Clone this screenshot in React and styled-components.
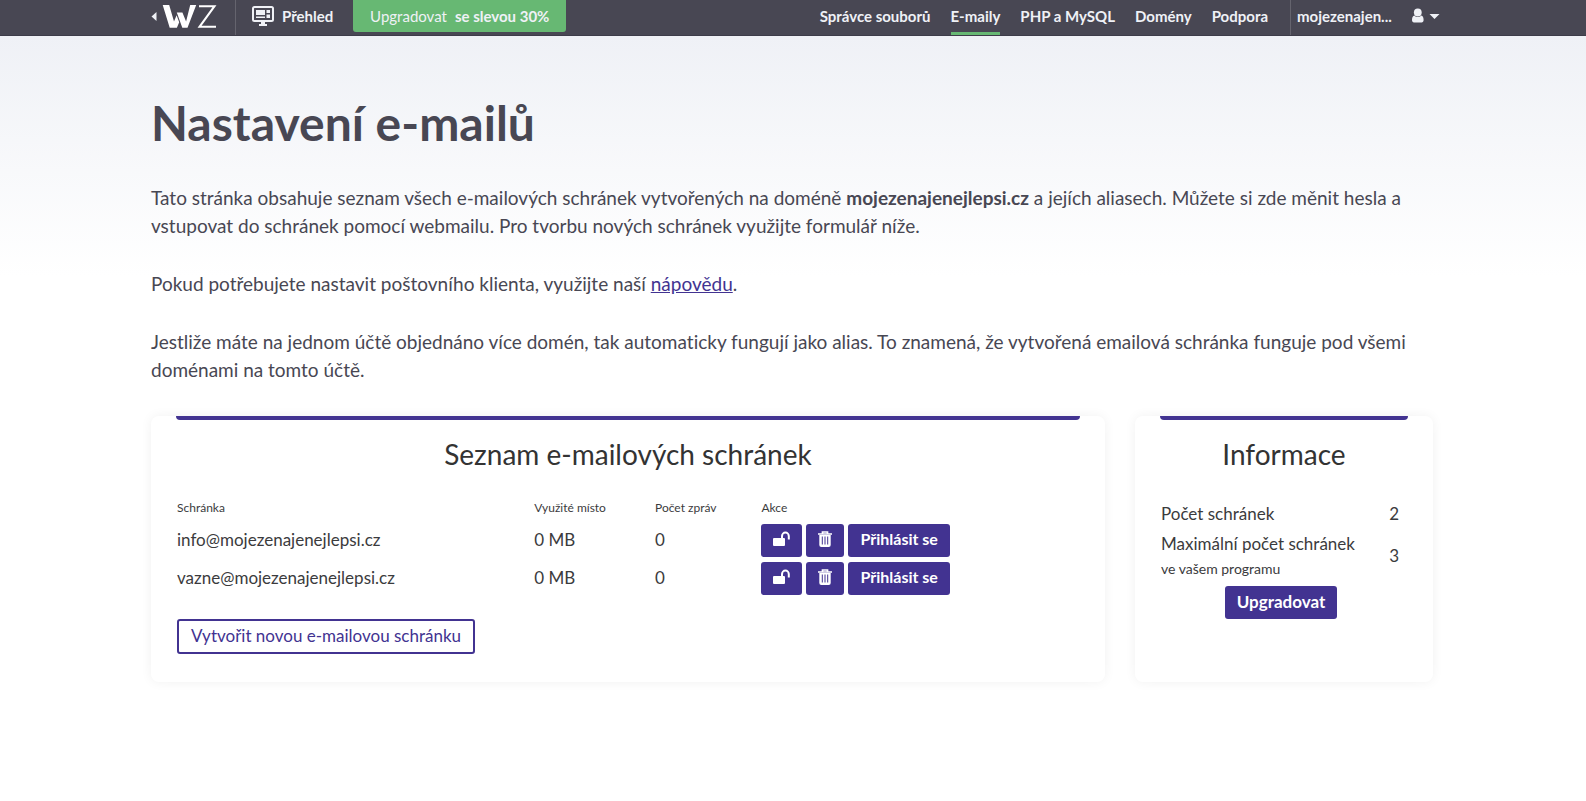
import React from 'react';
import styled, {createGlobalStyle} from 'styled-components';

const GlobalStyle = createGlobalStyle`
  * {
    box-sizing: border-box;
  }
  body {
    margin: 0;
    background: #fff linear-gradient(#eff1f6, #fff) no-repeat 0 36px / 100% 240px;
    color: #484753;
    font: 19px/28px Lato, "Liberation Sans", sans-serif;
    font-variant-ligatures: none;
  }
  button {
    font-family: inherit;
    cursor: pointer;
  }
`;

//-----< Header >-----\\
const Header = styled.header`
  background-color: #484753;
  border-bottom: 1px solid #3d3c49;
`;

const HeaderInner = styled.div`
  max-width: 1294px;
  height: 35px;
  margin: 0 auto;
  padding-left: 2px;
  display: flex;
  align-items: stretch;
  justify-content: space-between;
`;

const HeaderSide = styled.div`
  display: flex;
  align-items: stretch;
`;

const Logo = styled.a`
  display: flex;
  width: 88px;
  padding-left: 3px;
  border-right: 1px solid #65646e;
`;

const Overview = styled.a`
  display: flex;
  align-items: center;
  gap: 8px;
  padding: 0 20px 4px 16px;
  color: #eff1f6;
  font-size: 15px;
  font-weight: bold;
  line-height: 20px;
  text-decoration: none;
`;

const Promo = styled.a`
  display: flex;
  align-items: center;
  justify-content: center;
  gap: 8px;
  width: 213px;
  height: 32px;
  border-radius: 0 0 3px 3px;
  background-color: #67b873;
  color: #eff1f6;
  font-size: 15px;
  line-height: 20px;
  white-space: nowrap;
  text-decoration: none;
`;

const Nav = styled.nav`
  display: flex;
  gap: 20px;
  padding-right: 22px;
`;

const NavLink = styled.a`
  padding-top: 6px;
  border-bottom: 3px solid ${props => props.$active ? '#67b873' : 'transparent'};
  color: #eff1f6;
  font-size: 15px;
  font-weight: bold;
  line-height: 20px;
  white-space: nowrap;
  text-decoration: none;
`;

const Account = styled.button`
  display: flex;
  align-items: center;
  justify-content: space-between;
  width: 150px;
  padding: 0 0 3px 6px;
  border: 0;
  border-left: 1px solid #65646e;
  background: none;
  color: #eff1f6;
  font-size: 15px;
  font-weight: bold;
  line-height: 20px;
`;

const AccountName = styled.span`
  width: 96px;
  overflow: hidden;
  text-align: left;
  text-overflow: ellipsis;
  white-space: nowrap;
`;

//-----< Page >-----\\
const Page = styled.main`
  max-width: 1314px;
  margin: 0 auto;
  padding: 55px 17px 56px 15px;
`;

const Title = styled.h1`
  margin: 0 0 29px;
  font-size: 48px;
  font-weight: bold;
  line-height: 64px;
`;

const Text = styled.p`
  max-width: 1270px;
  margin: 0 0 30px;
`;

const TextLink = styled.a`
  color: #423391;
`;

const Cards = styled.div`
  display: grid;
  grid-template-columns: repeat(12, 1fr);
  gap: 30px;
  padding-top: 2px;
`;

const Card = styled.section`
  grid-column: span ${props => props.$span};
  min-height: 266px;
  padding: 0 26px 26px;
  border-radius: 8px;
  background-color: #fff;
  box-shadow: 0 0 12px rgba(0, 0, 0, .06);
  color: #3b3b3d;

  &::before {
    content: "";
    display: block;
    height: 4px;
    margin: 0 -1px;
    border-radius: 0 0 4px 4px;
    background-color: #423391;
  }
`;

const CardTitle = styled.h2`
  margin: 16px 0 27px;
  color: #333;
  font-size: 28px;
  font-weight: normal;
  line-height: 36px;
  text-align: center;
`;

const MailTable = styled.table`
  width: 100%;
  margin-bottom: 22px;
  border-collapse: collapse;
  table-layout: fixed;
  font-size: 17px;
  line-height: 24px;

  th {
    padding: 0 0 4px;
    font-size: 12px;
    font-weight: normal;
    line-height: 18px;
    text-align: left;
  }
  td {
    height: 38px;
    padding: 0;
  }
`;

const Col = styled.col`
  width: ${props => props.$width};
`;

const Actions = styled.div`
  display: flex;
  gap: 4px;
`;

const Button = styled.button`
  display: inline-flex;
  align-items: center;
  justify-content: center;
  height: ${props => props.$outline ? '35px' : '33px'};
  min-width: ${props => props.$wide ? '112px' : '0'};
  padding: 0 12px 2px;
  border: ${props => props.$outline ? '2px solid #423391' : '0'};
  border-radius: 3px;
  background-color: ${props => props.$outline ? '#fff' : '#423391'};
  color: ${props => props.$outline ? '#423391' : '#fff'};
  font-size: ${props => props.$outline || props.$wide ? '17px' : '16px'};
  font-weight: ${props => props.$outline ? 'normal' : 'bold'};
  line-height: 24px;
  white-space: nowrap;
`;

const InfoTable = styled.table`
  width: 100%;
  border-collapse: collapse;
  font-size: 17px;
  line-height: 26px;

  th {
    padding: 2px 0;
    font-weight: normal;
    text-align: left;
  }
  td {
    padding: 0 8px 0 0;
    text-align: right;
  }
`;

const Small = styled.small`
  display: block;
  font-size: 14px;
  line-height: 24px;
`;

const Centered = styled.div`
  display: flex;
  justify-content: center;
  padding: 3px 6px 0 0;
`;

//-----< Icons >-----\\
function LogoMark() {
  return (
    <svg width="66" height="32" viewBox="0 0 66 32" aria-hidden="true">
      <path d="M5.500 12v9L0.500 16.500z" fill="#eff1f6"/>
      <g fill="#fff">
        <path d="M11.700 5h6.500l4.800 16.500 2.600-6.200 2.600 7-2.300 5.400h-7.200z"/>
        <path d="M25.800 12.500h5.600l3.700 9L39.200 5h6l-8.700 22.700h-5.200z"/>
      </g>
      <path d="M48 6.200h15.500L48.500 26.800H65" fill="none" stroke="#fff" strokeWidth="2"/>
    </svg>
  )
}

function MonitorIcon() {
  return (
    <svg width="22" height="20" viewBox="0 0 22 20" aria-hidden="true">
      <rect x="1" y="1" width="20" height="14" rx="1.500" fill="none" stroke="#eff1f6" strokeWidth="2"/>
      <path d="M4 4h9v5H4zM14.500 4H18v3h-3.500zM14.500 8.500H18V12h-3.500zM4 10.500h9V12H4zM9 16h4v2h2v2H7v-2h2z" fill="#eff1f6"/>
    </svg>
  )
}

function UserIcon() {
  return (
    <svg width="28" height="16" viewBox="0 0 28 16" aria-hidden="true">
      <g fill="#eff1f6">
        <circle cx="5.800" cy="4.500" r="3.900"/>
        <path d="M2.500 7.500c1.600 2 5 2 6.600 0 1.900.5 2.500 2.200 2.500 4.500 0 1.500-.8 2.500-2 2.500H2c-1.200 0-2-1-2-2.500 0-2.300.7-4 2.500-4.500zM17.500 6h10l-5 5z"/>
      </g>
    </svg>
  )
}

function UnlockIcon() {
  return (
    <svg width="17" height="16" viewBox="0 0 17 16" aria-hidden="true">
      <rect x="0" y="7" width="12" height="8" rx="1" fill="#fff"/>
      <path d="M9 7.500V5a3.400 3.400 0 0 1 6.800 0v3.500" fill="none" stroke="#fff" strokeWidth="2"/>
    </svg>
  )
}

function TrashIcon() {
  return (
    <svg width="14" height="16" viewBox="0 0 14 16" aria-hidden="true">
      <path d="M0 3h14M4.500 2.800V1h5v1.800" fill="none" stroke="#fff" strokeWidth="1.700"/>
      <path d="M1.300 4h11.400v10q0 2-2 2H3.300q-2 0-2-2z" fill="#fff"/>
      <path d="M4.300 5.500v8M7 5.500v8M9.700 5.500v8" fill="none" stroke="#423391"/>
    </svg>
  )
}

const navItems = ['Správce souborů', 'E-maily', 'PHP a MySQL', 'Domény', 'Podpora'];

const mailboxes = [
  {address: 'info@mojezenajenejlepsi.cz', used: '0 MB', count: 0},
  {address: 'vazne@mojezenajenejlepsi.cz', used: '0 MB', count: 0},
];

function TopBar() {
  return (
    <Header>
      <HeaderInner>
        <HeaderSide>
          <Logo href="#" aria-label="WZ"><LogoMark/></Logo>
          <Overview href="#"><MonitorIcon/>Přehled</Overview>
          <Promo href="#">Upgradovat <strong>se slevou 30%</strong></Promo>
        </HeaderSide>
        <HeaderSide>
          <Nav>
            {navItems.map(item => (
              <NavLink key={item} href="#" $active={item === 'E-maily'}>{item}</NavLink>
            ))}
          </Nav>
          <Account>
            <AccountName>mojezenajen...</AccountName>
            <UserIcon/>
          </Account>
        </HeaderSide>
      </HeaderInner>
    </Header>
  )
}

function MailboxRow({mailbox}) {
  return (
    <tr>
      <td>{mailbox.address}</td>
      <td>{mailbox.used}</td>
      <td>{mailbox.count}</td>
      <td>
        <Actions>
          <Button aria-label="Změnit heslo"><UnlockIcon/></Button>
          <Button aria-label="Smazat"><TrashIcon/></Button>
          <Button>Přihlásit se</Button>
        </Actions>
      </td>
    </tr>
  )
}

export default function App() {
  return (
    <>
      <GlobalStyle/>
      <TopBar/>
      <Page>
        <Title>Nastavení e-mailů</Title>
        <Text>
          Tato stránka obsahuje seznam všech e-mailových schránek vytvořených na doméně <strong>mojezenajenejlepsi.cz</strong> a
          jejích aliasech. Můžete si zde měnit hesla a vstupovat do schránek pomocí webmailu. Pro tvorbu nových schránek
          využijte formulář níže.
        </Text>
        <Text>
          Pokud potřebujete nastavit poštovního klienta, využijte naší <TextLink href="#">nápovědu</TextLink>.
        </Text>
        <Text>
          Jestliže máte na jednom účtě objednáno více domén, tak automaticky fungují jako alias. To znamená, že vytvořená
          emailová schránka funguje pod všemi doménami na tomto účtě.
        </Text>
        <Cards>
          <Card $span={9}>
            <CardTitle>Seznam e-mailových schránek</CardTitle>
            <MailTable>
              <colgroup>
                <Col $width="39.600%"/>
                <Col $width="13.400%"/>
                <Col $width="11.800%"/>
                <Col/>
              </colgroup>
              <thead>
                <tr>
                  <th>Schránka</th>
                  <th>Využité místo</th>
                  <th>Počet zpráv</th>
                  <th>Akce</th>
                </tr>
              </thead>
              <tbody>
                {mailboxes.map(mailbox => <MailboxRow key={mailbox.address} mailbox={mailbox}/>)}
              </tbody>
            </MailTable>
            <Button $outline>Vytvořit novou e-mailovou schránku</Button>
          </Card>
          <Card $span={3}>
            <CardTitle>Informace</CardTitle>
            <InfoTable>
              <tbody>
                <tr>
                  <th scope="row">Počet schránek</th>
                  <td>2</td>
                </tr>
                <tr>
                  <th scope="row">Maximální počet schránek<Small>ve vašem programu</Small></th>
                  <td>3</td>
                </tr>
              </tbody>
            </InfoTable>
            <Centered>
              <Button $wide>Upgradovat</Button>
            </Centered>
          </Card>
        </Cards>
      </Page>
    </>
  )
}
